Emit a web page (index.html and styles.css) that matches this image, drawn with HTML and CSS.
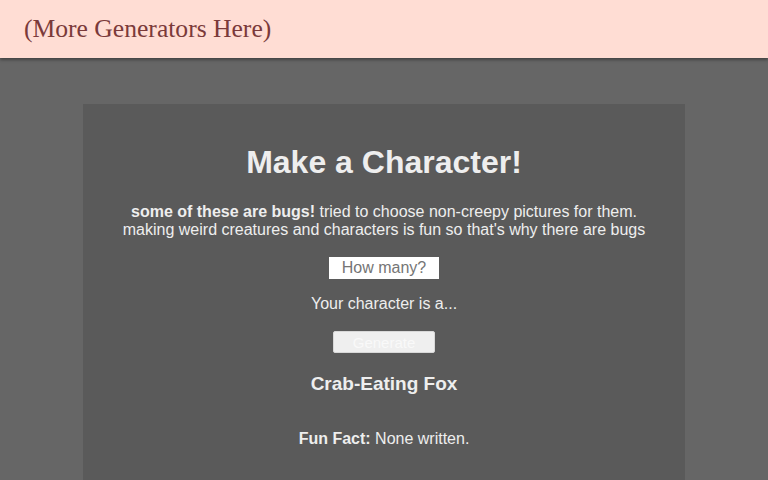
FILE: index.html
```html
<!DOCTYPE html>
<html>
<head>
<meta charset="utf-8">
<link rel="stylesheet" href="styles.css">
</head>
<body>
<header class="topbar">(More Generators Here)</header>
<main class="card">
  <h1 class="title">Make a Character!</h1>
  <p class="desc"><b>some of these are bugs!</b> tried to choose non-creepy pictures for them.<br>making weird creatures and characters is fun so that's why there are bugs</p>
  <input class="count" type="text" placeholder="How many?">
  <p class="lead">Your character is a...</p>
  <button class="gen">Generate</button>
  <h3 class="result">Crab-Eating Fox</h3>
  <p class="fact"><b>Fun Fact:</b> None written.</p>
</main>
</body>
</html>
```
FILE: styles.css
```css
html, body { margin: 0; padding: 0; }
body {
  background: #666666;
  font-family: "Liberation Sans", Arial, sans-serif;
  color: #eeeeee;
  height: 480px;
  overflow: hidden;
}
.topbar {
  height: 58px;
  box-sizing: border-box;
  background: #ffddd4;
  color: #7b3a3a;
  font-family: "Liberation Serif", "Times New Roman", serif;
  font-size: 25.6px;
  line-height: 58px;
  padding-left: 24px;
  box-shadow: 0 2px 3px rgba(0,0,0,0.35);
  position: relative;
}
.card {
  width: 602px;
  box-sizing: border-box;
  margin: 46px auto 0;
  background: #5a5a5a;
  padding-top: 40px;
  display: flex;
  flex-direction: column;
  align-items: center;
  text-align: center;
  height: 376px;
}
.title {
  margin: 0;
  font-size: 32px;
  line-height: 37px;
  font-weight: bold;
}
.desc {
  margin: 22px 0 0;
  font-size: 16px;
  line-height: 18px;
}
.count {
  margin-top: 18px;
  width: 110px;
  height: 22px;
  box-sizing: border-box;
  border: none;
  background: #ffffff;
  font-family: "Liberation Sans", Arial, sans-serif;
  font-size: 16px;
  text-align: center;
  padding: 0;
  outline: none;
}
.count::placeholder { color: #757575; }
.lead {
  margin: 16px 0 0;
  font-size: 16px;
  line-height: 18px;
}
.gen {
  margin-top: 18px;
  width: 102px;
  height: 22px;
  box-sizing: border-box;
  background: #efefef;
  border: 1px solid #d8d8d8;
  border-radius: 2px;
  color: #f9f9f9;
  font-family: "Liberation Sans", Arial, sans-serif;
  font-size: 15px;
  padding: 0;
}
.result {
  margin: 20px 0 0;
  font-size: 19px;
  line-height: 22px;
  font-weight: bold;
}
.fact {
  margin: 35px 0 0;
  font-size: 16px;
  line-height: 18px;
}
```
